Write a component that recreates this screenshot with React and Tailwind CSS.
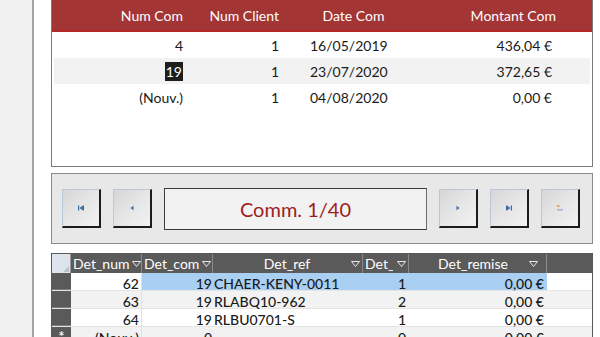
import React from "react";

const font = { fontFamily: "Lato, 'Open Sans', sans-serif" };

const commandes = [
  { num: "4", client: "1", date: "16/05/2019", montant: "436,04 €" },
  { num: "19", client: "1", date: "23/07/2020", montant: "372,65 €", current: true },
  { num: "(Nouv.)", client: "1", date: "04/08/2020", montant: "0,00 €" },
];

const details = [
  { num: "62", com: "19", ref: "CHAER-KENY-0011", qte: "1", remise: "0,00 €", selected: true },
  { num: "63", com: "19", ref: "RLABQ10-962", qte: "2", remise: "0,00 €" },
  { num: "64", com: "19", ref: "RLBU0701-S", qte: "1", remise: "0,00 €" },
  { num: "(Nouv.)", com: "0", ref: "", qte: "0", remise: "0,00 €", isNew: true },
];

const NavIcon = ({ kind }) => {
  const c = "#3b6ea8";
  return (
    <svg width="10" height="8" viewBox="0 0 10 8">
      {kind === "first" && (
        <>
          <rect x="2" y="1.5" width="1.2" height="5" fill={c} />
          <path d="M3.5 4 L7 1.5 V6.5 Z" fill={c} />
          <rect x="7" y="1.5" width="1" height="5" fill={c} />
        </>
      )}
      {kind === "prev" && <path d="M3.5 4 L6.5 1.8 V6.2 Z" fill={c} />}
      {kind === "next" && <path d="M6.5 4 L3.5 1.8 V6.2 Z" fill={c} />}
      {kind === "last" && (
        <>
          <rect x="2" y="1.5" width="1" height="5" fill={c} />
          <path d="M6.5 4 L3 1.5 V6.5 Z" fill={c} />
          <rect x="6.8" y="1.5" width="1.2" height="5" fill={c} />
        </>
      )}
      {kind === "new" && (
        <>
          <rect x="2" y="1" width="2.5" height="2" fill="#e0a848" />
          <path d="M2 5 H8 V6.5 H2 Z" fill="#9fb4cf" />
        </>
      )}
    </svg>
  );
};

const NavButton = ({ kind }) => (
  <button
    type="button"
    className="w-[39px] h-[39px] flex items-center justify-center border border-t-[#b9c7d8] border-l-[#b9c7d8] border-r-2 border-b-2 border-r-[#1c1c1c] border-b-[#1c1c1c] bg-gradient-to-br from-[#d6d6d6] via-[#e6e6e6] to-[#f2f2f2]"
  >
    <NavIcon kind={kind} />
  </button>
);

const Arrow = () => (
  <svg width="9" height="6" viewBox="0 0 9 6" className="shrink-0">
    <path d="M0.5 0.5 H8.5 L4.5 5.5 Z" fill="none" stroke="#e8e8e8" strokeWidth="1" />
  </svg>
);

export default function App() {
  return (
    <div className="w-[600px] h-[337px] overflow-hidden flex bg-white text-[#1a1a1a]" style={font}>
      <div className="w-[32px] bg-[#f0f0f0]" />
      <div className="w-[2px] bg-[#a3a3a3]" />

      <div className="flex-1 flex flex-col pl-[17px] pr-[7px]">
        {/* Sous-formulaire commandes */}
        <div className="h-[167px] border-x border-b border-[#7a7a7a] flex flex-col shrink-0">
          <div className="h-[32px] bg-[#a33535] border-b-2 border-[#b42828] flex items-center text-white text-[14px]">
            <div className="w-[134px] text-right pr-[3px]">Num Com</div>
            <div className="w-[96px] text-right pr-[3px]">Num Client</div>
            <div className="w-[25px]" />
            <div className="w-[93px] text-center">Date Com</div>
            <div className="w-[159px] text-right pr-[3px]">Montant Com</div>
          </div>
          {commandes.map((r, i) => (
            <div
              key={i}
              className={`h-[26px] mx-[2px] flex items-center text-[14px] ${i === 1 ? "bg-[#f2f2f2]" : "bg-white"}`}
            >
              <div className="w-[132px] text-right pr-[3px]">
                {r.current ? <span className="bg-[#1e1e1e] text-white px-[1px] py-[1px]">{r.num}</span> : r.num}
              </div>
              <div className="w-[96px] text-right pr-[3px]">{r.client}</div>
              <div className="w-[25px]" />
              <div className="w-[93px] pl-[3px]">{r.date}</div>
              <div className="w-[159px] text-right pr-[7px]">{r.montant}</div>
            </div>
          ))}
        </div>

        {/* Barre de navigation */}
        <div className="mt-[6px] h-[71px] shrink-0 border border-[#8a8a8a] bg-[#e8e8e8] flex items-center pl-[10px] gap-[12px]">
          <NavButton kind="first" />
          <NavButton kind="prev" />
          <div className="w-[263px] h-[42px] border border-[#3a3a3a] border-r-[#6a6a6a] bg-[#f2f2f2] flex items-center justify-center text-[20px] text-[#a01e1e]">
            Comm. 1/40
          </div>
          <NavButton kind="next" />
          <NavButton kind="last" />
          <NavButton kind="new" />
        </div>

        {/* Feuille de données détails */}
        <div className="mt-[9px] flex-1 border-x border-t border-[#5a5a5a] flex flex-col text-[14px] overflow-hidden">
          <div className="h-[19px] shrink-0 flex bg-[#5a5a5a] text-white">
            <div className="w-[19px] bg-[#dde4ec] border-r border-[#9a9a9a] relative">
              <svg width="6" height="6" viewBox="0 0 6 6" className="absolute right-[1px] bottom-[1px]">
                <path d="M6 0 V6 H0 Z" fill="#b8c2cc" />
              </svg>
            </div>
            <div className="w-[71px] flex items-center gap-[3px] px-[2px] border-r border-[#8a8a8a]">
              <span>Det_num</span>
              <Arrow />
            </div>
            <div className="w-[71px] flex items-center gap-[3px] px-[2px] border-r border-[#8a8a8a]">
              <span>Det_com</span>
              <Arrow />
            </div>
            <div className="w-[150px] flex items-center justify-between pl-[6px] pr-[2px] border-r border-[#8a8a8a]">
              <span className="flex-1 text-center pl-[4px]">Det_ref</span>
              <Arrow />
            </div>
            <div className="w-[46px] flex items-center justify-between px-[2px] border-r border-[#8a8a8a] overflow-hidden">
              <span className="w-[28px] overflow-hidden whitespace-nowrap">Det_qte</span>
              <Arrow />
            </div>
            <div className="w-[138px] flex items-center justify-between pl-[6px] pr-[8px] border-r border-[#8a8a8a]">
              <span className="flex-1 text-center pl-[2px]">Det_remise</span>
              <Arrow />
            </div>
            <div className="flex-1" />
          </div>

          {details.map((d, i) => {
            const stripe = i % 2 === 1 ? "bg-[#f2f2f2]" : "bg-white";
            const sel = d.selected ? "bg-[#a9cff2]" : stripe;
            return (
              <div key={i} className={`h-[18px] shrink-0 flex items-center ${stripe} border-b border-[#e4e4e4] font-medium`}>
                <div className="w-[19px] h-full bg-[#5a5a5a] border-b border-[#7c7c7c] text-white text-[15px] leading-[18px] text-center">
                  {d.isNew ? "*" : ""}
                </div>
                <div className={`w-[71px] h-full text-right pr-[2px] border-r border-[#e0e0e0] ${stripe}`}>{d.num}</div>
                <div className={`w-[71px] h-full text-right pr-[1px] ${sel}`}>{d.com}</div>
                <div className={`w-[150px] h-full pl-[1px] ${sel}`}>{d.ref}</div>
                <div className={`w-[46px] h-full text-right pr-[3px] ${sel}`}>{d.qte}</div>
                <div className={`w-[138px] h-full text-right pr-[3px] ${sel}`}>{d.remise}</div>
                <div className={`flex-1 h-full ${d.selected ? "bg-white" : stripe}`} />
              </div>
            );
          })}
        </div>
      </div>
    </div>
  );
}
